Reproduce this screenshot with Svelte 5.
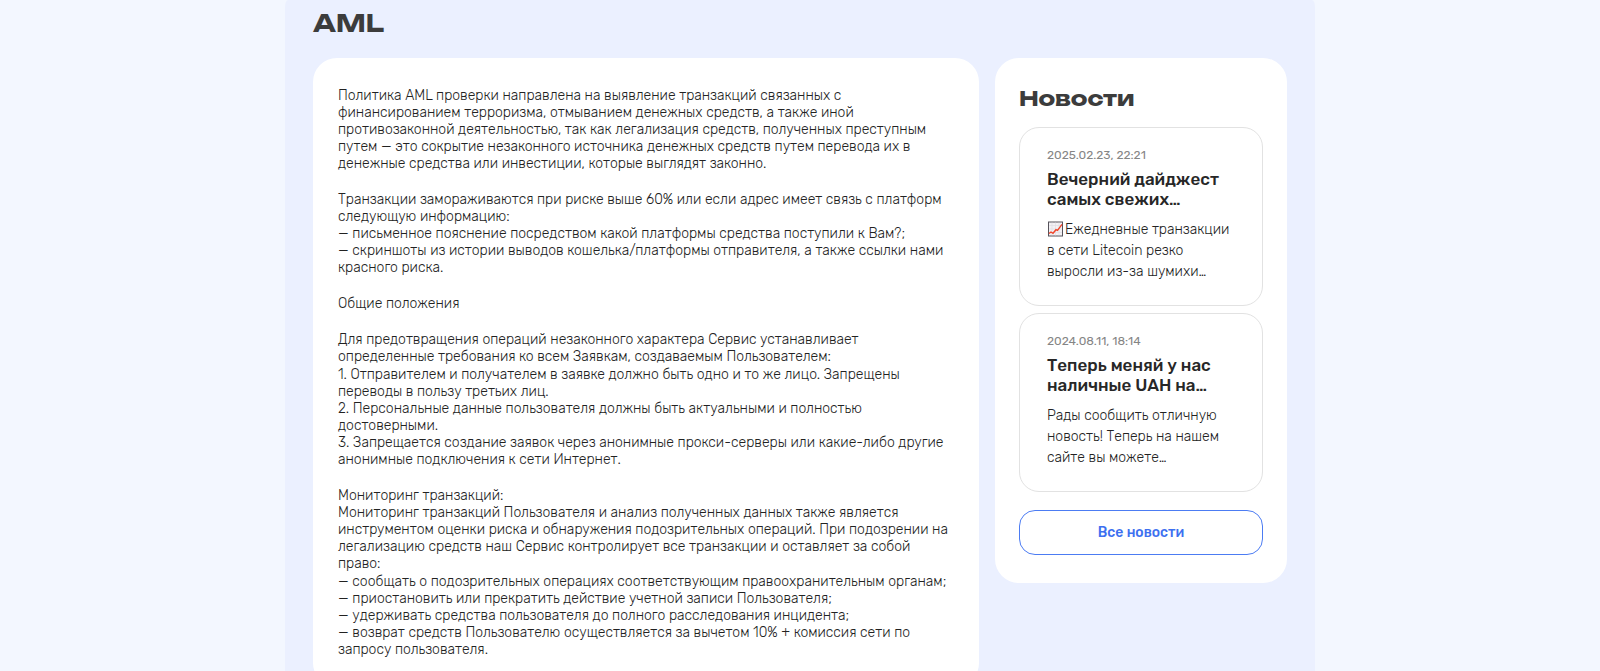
<script>
  const news = [
    {
      date: '2025.02.23, 22:21',
      title: ['Вечерний дайджест', 'самых свежих…'],
      chart: true,
      text: ['Ежедневные транзакции', 'в сети Litecoin резко', 'выросли из-за шумихи…']
    },
    {
      date: '2024.08.11, 18:14',
      title: ['Теперь меняй у нас', 'наличные UAH на…'],
      chart: false,
      text: ['Рады сообщить отличную', 'новость! Теперь на нашем', 'сайте вы можете…']
    }
  ];
</script>

<div class="scroller">
  <main class="page">
    <h1>AML</h1>
    <div class="columns">
      <article class="card policy">
        <section>
          <p>
            Политика AML проверки направлена на выявление транзакций связанных с<br />
            финансированием терроризма, отмыванием денежных средств, а также иной<br />
            противозаконной деятельностью, так как легализация средств, полученных преступным<br />
            путем — это сокрытие незаконного источника денежных средств путем перевода их в<br />
            денежные средства или инвестиции, которые выглядят законно.
          </p>
        </section>
        <section>
          <p>
            Транзакции замораживаются при риске выше 60% или если адрес имеет связь с платформ<br />
            следующую информацию:<br />
            — письменное пояснение посредством какой платформы средства поступили к Вам?;<br />
            — скриншоты из истории выводов кошелька/платформы отправителя, а также ссылки нами<br />
            красного риска.
          </p>
        </section>
        <section><p>Общие положения</p></section>
        <section>
          <p>
            Для предотвращения операций незаконного характера Сервис устанавливает<br />
            определенные требования ко всем Заявкам, создаваемым Пользователем:
          </p>
          <p>
            1. Отправителем и получателем в заявке должно быть одно и то же лицо. Запрещены<br />
            переводы в пользу третьих лиц.<br />
            2. Персональные данные пользователя должны быть актуальными и полностью<br />
            достоверными.<br />
            3. Запрещается создание заявок через анонимные прокси-серверы или какие-либо другие<br />
            анонимные подключения к сети Интернет.
          </p>
        </section>
        <section>
          <p>
            Мониторинг транзакций:<br />
            Мониторинг транзакций Пользователя и анализ полученных данных также является<br />
            инструментом оценки риска и обнаружения подозрительных операций. При подозрении на<br />
            легализацию средств наш Сервис контролирует все транзакции и оставляет за собой<br />
            право:
          </p>
          <p>
            — сообщать о подозрительных операциях соответствующим правоохранительным органам;<br />
            — приостановить или прекратить действие учетной записи Пользователя;<br />
            — удерживать средства пользователя до полного расследования инцидента;<br />
            — возврат средств Пользователю осуществляется за вычетом 10% + комиссия сети по<br />
            запросу пользователя.
          </p>
        </section>
      </article>

      <aside class="card news">
        <h2>Новости</h2>
        <div class="list">
          {#each news as item}
            <article class="item">
              <time>{item.date}</time>
              <h3>{item.title[0]}<br />{item.title[1]}</h3>
              <p>
                {#if item.chart}<svg viewBox="0 0 16 16" aria-hidden="true">
                    <rect x="1" y="1" width="14" height="14" fill="#f3f1f4" stroke="#55525a" />
                    <path d="M4.5 1.5v13M8 1.5v13M11.5 1.5v13M1.5 4.5h13M1.5 8h13M1.5 11.5h13" stroke="#dedbe2" stroke-width=".6" />
                    <path d="M1.5 12.5l2-1.500 2 1.300 3-3.600 1.500.600 4.500-6" fill="none" stroke="#f0452a" stroke-width="1.4" />
                  </svg>{/if}{item.text[0]}<br />{item.text[1]}<br />{item.text[2]}
              </p>
            </article>
          {/each}
        </div>
        <button type="button">Все новости</button>
      </aside>
    </div>
  </main>
</div>

<style>
  :global(body) {
    margin: 0;
    background: #f3f7ff;
    color: #222;
    font-family: Rubik, Roboto, sans-serif;
    font-size: 14px;
    font-weight: 300;
  }

  .scroller {
    height: 100vh;
    overflow-y: auto;
    scrollbar-width: none;
  }

  .page {
    box-sizing: border-box;
    max-width: 1030px;
    min-height: 100vh;
    margin: 0 auto;
    padding: 7px 28px 28px;
    border-radius: 3px / 8px;
    background: #ebf0ff;
  }

  h1,
  h2 {
    margin: 0;
    color: #3c3c3c;
    font-family: Unbounded, 'DejaVu Sans', sans-serif;
    font-weight: 700;
    line-height: 32px;
  }

  h1 {
    font-size: 24px;
  }

  h2 {
    font-size: 21px;
  }

  .columns {
    display: grid;
    grid-template-columns: minmax(0, 1fr) 292px;
    align-items: start;
    gap: 16px;
    margin-top: 19px;
  }

  .card {
    border-radius: 24px;
    background: #fff;
  }

  .policy {
    display: flex;
    flex-direction: column;
    gap: 19px;
    padding: 29px 12px 29px 25px;
    line-height: 17px;
  }

  .policy p {
    margin: 0;
  }

  .policy p + p {
    margin-top: 1px;
  }

  .news {
    padding: 24px 24px 28px;
  }

  .list {
    display: grid;
    gap: 7px;
    margin-top: 13px;
  }

  .item {
    padding: 18px 20px 23px 27px;
    border: 1px solid #e2e2e2;
    border-radius: 20px;
  }

  time {
    display: block;
    color: #858585;
    font-size: 12px;
    font-weight: 400;
    line-height: 18px;
  }

  h3 {
    margin: 5px 0 10px;
    color: #272727;
    font-size: 17px;
    font-weight: 500;
    line-height: 20px;
  }

  .item p {
    margin: 0;
    line-height: 21px;
  }

  .item svg {
    width: 17px;
    height: 16px;
    margin-right: 1px;
    vertical-align: -3px;
  }

  button {
    width: 100%;
    height: 45px;
    margin-top: 18px;
    border: 1px solid #4c7cf3;
    border-radius: 16px;
    background: #fff;
    color: #3d70f0;
    font: 500 14px/20px Rubik, Roboto, sans-serif;
    cursor: pointer;
  }
</style>
